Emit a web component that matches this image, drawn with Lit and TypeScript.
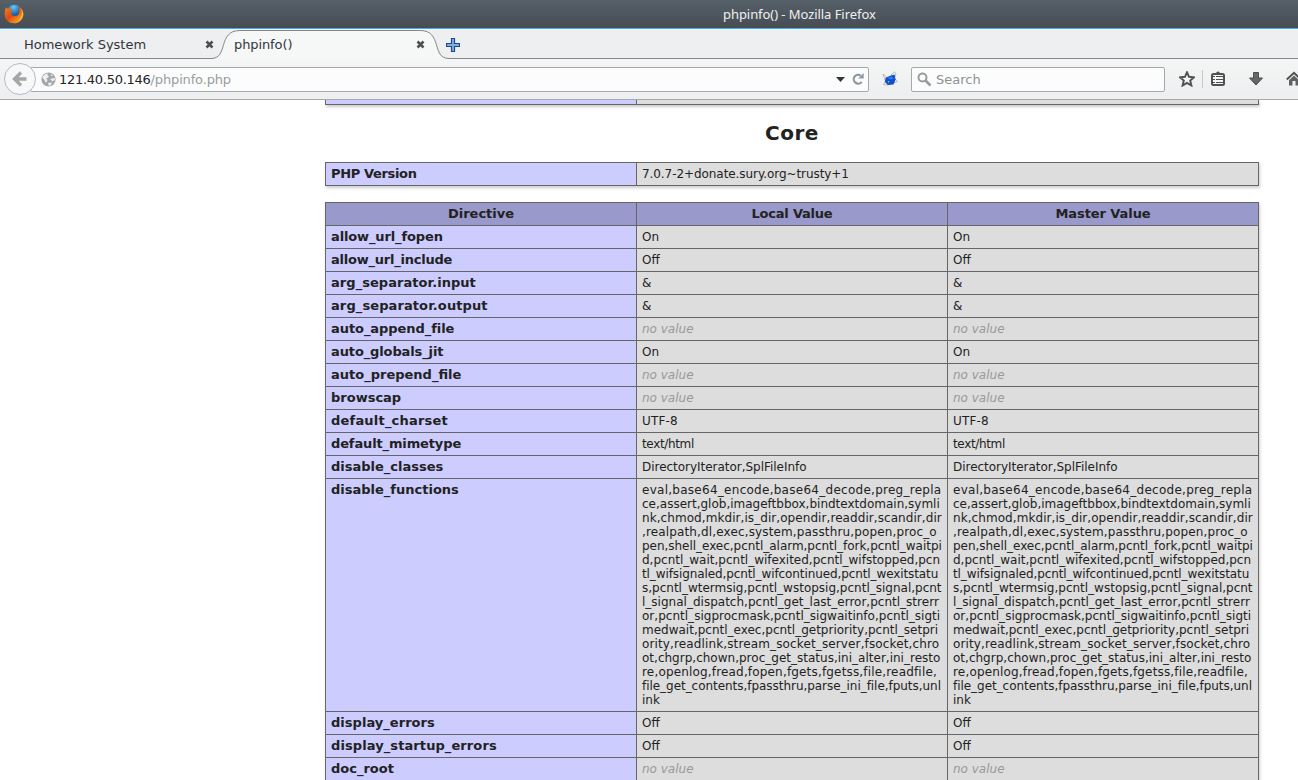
import { LitElement, html, css, svg } from "lit";
import { customElement } from "lit/decorators.js";
import { styleMap } from "lit/directives/style-map.js";

// Each line of text is paired with its tracking in pixels.
type Line = [string, number];

const DISABLED: Line[] = [
  ["eval,base64_encode,base64_decode,preg_repla", 0.27],
  ["ce,assert,glob,imageftbbox,bindtextdomain,symli", 0],
  ["nk,chmod,mkdir,is_dir,opendir,readdir,scandir,dir", 0.07],
  [",realpath,dl,exec,system,passthru,popen,proc_o", 0.14],
  ["pen,shell_exec,pcntl_alarm,pcntl_fork,pcntl_waitpi", -0.03],
  ["d,pcntl_wait,pcntl_wifexited,pcntl_wifstopped,pcn", 0],
  ["tl_wifsignaled,pcntl_wifcontinued,pcntl_wexitstatu", -0.1],
  ["s,pcntl_wtermsig,pcntl_wstopsig,pcntl_signal,pcnt", 0],
  ["l_signal_dispatch,pcntl_get_last_error,pcntl_strerr", 0.01],
  ["or,pcntl_sigprocmask,pcntl_sigwaitinfo,pcntl_sigti", 0.02],
  ["medwait,pcntl_exec,pcntl_getpriority,pcntl_setpri", 0],
  ["ority,readlink,stream_socket_server,fsocket,chro", 0.13],
  ["ot,chgrp,chown,proc_get_status,ini_alter,ini_resto", 0.01],
  ["re,openlog,fread,fopen,fgets,fgetss,file,readfile,", 0.17],
  ["file_get_contents,fpassthru,parse_ini_file,fputs,unl", -0.04],
  ["ink", 0],
];

const ROWS: [Line, Line[] | null][] = [
  [["allow_url_fopen", -0.13], [["On", 0]]],
  [["allow_url_include", -0.23], [["Off", 0]]],
  [["arg_separator.input", 0.05], [["&", 0]]],
  [["arg_separator.output", 0.1], [["&", 0]]],
  [["auto_append_file", -0.06], null],
  [["auto_globals_jit", -0.12], [["On", 0]]],
  [["auto_prepend_file", 0], null],
  [["browscap", 0], null],
  [["default_charset", 0.2], [["UTF-8", 0.15]]],
  [["default_mimetype", -0.13], [["text/html", -0.35]]],
  [["disable_classes", 0], [["DirectoryIterator,SplFileInfo", -0.03]]],
  [["disable_functions", 0], DISABLED],
  [["display_errors", 0.03], [["Off", 0]]],
  [["display_startup_errors", 0.09], [["Off", 0]]],
  [["doc_root", 0], null],
];

const line = ([text, tracking]: Line) =>
  html`<div style=${styleMap(tracking ? { letterSpacing: `${tracking}px` } : {})}>${text}</div>`;

@customElement("php-info")
export class PhpInfo extends LitElement {
  static styles = css`
    :host { display: block; flex: 1; min-height: 0; overflow: hidden; background: #fff; color: #222;
      font: 12px/14px "DejaVu Sans", sans-serif; }
    .page { width: 934px; margin-left: 325px; }
    .grid { display: grid; gap: 1px; padding: 1px; background: #666; box-shadow: 1px 2px 3px #ccc; }
    .two { grid-template-columns: 310px 621px; }
    .three { grid-template-columns: 310px 310px 310px; }
    .prev { padding-top: 0; height: 4px; }
    .grid > div { padding: 4px 5px; min-width: 0; white-space: pre; }
    .grid > .e { background: #ccf; font-weight: bold; font-size: 13px; }
    .grid > .h { background: #99c; font-weight: bold; text-align: center; font-size: 13px; }
    .grid > .v { background: #ddd; }
    .grid > .bare { padding: 0; }
    i { color: #999; }
    h2 { margin: 0; height: 57px; line-height: 57px; text-align: center; font-size: 20px; letter-spacing: 0.5px; }
    .gap { height: 16px; }
  `;
  render() {
    const cell = (v: Line[] | null) => html`<div class="v">${v === null ? html`<i>no value</i>` : v.map(line)}</div>`;
    return html`<div class="page">
      <div class="grid two prev"><div class="e bare"></div><div class="v bare"></div></div>
      <h2>Core</h2>
      <div class="grid two">
        <div class="e">${line(["PHP Version", -0.35])}</div>
        <div class="v">${line(["7.0.7-2+donate.sury.org~trusty+1", -0.07])}</div>
      </div>
      <div class="gap"></div>
      <div class="grid three">
        <div class="h">${line(["Directive", 0])}</div>
        <div class="h">${line(["Local Value", -0.22])}</div>
        <div class="h">${line(["Master Value", -0.08])}</div>
        ${ROWS.map(([k, v]) => html`<div class="e">${line(k)}</div>${cell(v)}${cell(v)}`)}
      </div>
    </div>`;
  }
}

const close = svg`<path d="M1.5 1.5 7.5 7.5M7.5 1.5 1.5 7.5" stroke="#4b4f52" stroke-width="2.5"/>`;

@customElement("app-root")
export class AppRoot extends LitElement {
  static styles = css`
    :host { display: flex; flex-direction: column; width: 1298px; height: 780px; overflow: hidden;
      font: 13px/16px "DejaVu Sans", sans-serif; color: #31363b; background: #fff; }
    svg { display: block; flex: none; }
    .title { height: 28px; flex: none; border-bottom: 1px solid #3daee9; box-sizing: content-box;
      background: linear-gradient(#566069, #464c53); color: #eff0f1; display: flex; align-items: center;
      font: 13px/18px "Noto Sans", sans-serif; letter-spacing: -0.06px; }
    .title svg { margin-left: 4px; }
    .title span { margin-left: 699px; }
    .tabs { height: 30px; flex: none; display: grid; background: #eeeff0; box-shadow: inset 0 1px #fcfcfc; }
    .tabs > * { grid-area: 1 / 1; }
    .labels { display: flex; align-items: center; padding: 1px 0 0 24px; }
    .t1 { width: 181px; letter-spacing: -0.03px; }
    .t2 { width: 182px; margin-left: 20px; letter-spacing: -0.1px; }
    .plus { margin-left: 21px; }
    .bar { height: 40px; flex: none; border-bottom: 1px solid #a6a8ab; display: flex; align-items: center;
      background: linear-gradient(#f4f5f5, #edeeef); overflow: hidden; }
    .bar > * { flex: none; }
    .back { width: 30px; height: 30px; border: 1px solid #b4bcc5; border-radius: 50%; background: #f7f8f8;
      margin-left: 4px; display: grid; place-items: center; z-index: 1; }
    .url { box-sizing: border-box; width: 839px; height: 25px; margin-left: -6px; border: 1px solid #a5a9ad;
      border-radius: 2px; background: #fcfcfc; display: flex; align-items: center; padding-left: 10px; }
    .addr { margin-left: 3px; padding-top: 1px; flex: 1; color: #999c9e; letter-spacing: -0.15px; }
    .addr b { font-weight: normal; color: #232629; letter-spacing: -0.27px; }
    .caret { margin-right: 7px; }
    .reload { margin-right: 4px; }
    .bird { margin-left: 13px; }
    .search { box-sizing: border-box; width: 254px; height: 25px; margin-left: 13px; border: 1px solid #a5a9ad;
      border-radius: 2px; background: #fcfcfc; display: flex; align-items: center; padding-left: 5px; gap: 4px; color: #8f9294; }
    .search span { padding-top: 1px; }
    .tools { display: flex; align-items: center; margin-left: 14px; }
    .sep { width: 1px; height: 18px; background: #c5cad0; margin: 0 7px; }
    .down { margin: 0 23px 0 23px; }
  `;
  render() {
    return html`
      <div class="title">
        <svg width="20" height="20" viewBox="0 0 20 20">
          <defs>
            <linearGradient id="fx" x1="0" y1="0" x2="1" y2="1"><stop offset="0" stop-color="#f08a1c"/><stop offset=".45" stop-color="#df4a14"/><stop offset=".75" stop-color="#f58a1c"/><stop offset="1" stop-color="#ffd43a"/></linearGradient>
            <radialGradient id="gl" cx=".45" cy=".15" r=".85"><stop offset="0" stop-color="#68c8f2"/><stop offset=".5" stop-color="#1b72b8"/><stop offset="1" stop-color="#0c2a63"/></radialGradient>
          </defs>
          <circle cx="10.4" cy="8.5" r="7.8" fill="url(#gl)"/>
          <path d="M2.2 3.2 4 5C5 4 6 4 7 4.2L6.5 6 9 7.3 7.2 9 8 11C10 13 13 12 14.5 10.5 16 8 15.5 5 14 2.2 18 4 19.6 7 19.3 11 18.7 16 15 19.3 10 19.3 4.5 19.3.8 15.5.7 10.5.7 7.5 1 5.3 2.2 3.2Z" fill="url(#fx)"/>
          <path d="M16.2 4C19 7.5 18.5 13 14.5 16.2 17.5 15.5 19 13 19.3 10.5 19.3 8 18 5.5 16.2 4Z" fill="#ffc02e"/>
        </svg>
        <span>phpinfo() - Mozilla Firefox</span>
      </div>
      <div class="tabs">
        <svg width="1298" height="30" viewBox="0 0 1298 30">
          <path d="M213 30C229 29 217 1.5 239 1.5H421C443 1.5 431 29 447 30Z" fill="#f6f7f7"/>
          <path d="M0 29.5H211C229 29.5 217 1.5 240 1.5H420C443 1.5 431 29.5 449 29.5H1298" fill="none" stroke="#85878a"/>
        </svg>
        <div class="labels">
          <span class="t1">Homework System</span>
          <svg width="9" height="9">${close}</svg>
          <span class="t2">phpinfo()</span>
          <svg width="9" height="9">${close}</svg>
          <svg class="plus" width="14" height="14"><path d="M5.5.5h3v5h5v3h-5v5h-3v-5h-5v-3h5Z" fill="#7cb0e2" stroke="#1f4a87" stroke-width="1.2"/></svg>
        </div>
      </div>
      <div class="bar">
        <div class="back"><svg width="16" height="16"><path d="M9 1.5 2.5 8 9 14.5M3 8H14.5" fill="none" stroke="#a5a6a7" stroke-width="3.3"/></svg></div>
        <div class="url">
          <svg width="15" height="15"><circle cx="7.5" cy="7.5" r="7.1" fill="#a5a6a7"/><path d="M1.2 5 4 2.2 7 1.2 6.3 3 8 4.5 5.5 6.8 6.5 8.5 5 11 3.5 8.2ZM9.5 2 12 3.2 10.8 4.5ZM9 7 13.8 5.8 13.8 8 11.5 9.5ZM7 11 11 10.5 9.5 13.5 7.5 13.6Z" fill="#eee"/></svg>
          <span class="addr"><b>121.40.50.146</b>/phpinfo.php</span>
          <svg class="caret" width="9" height="5"><path d="M0 0H9L4.5 5Z" fill="#31363b"/></svg>
          <svg class="reload" width="12" height="12"><path d="M9.7 8.8A4.4 4.4 0 1 1 8.7 2.6" fill="none" stroke="#8d99a5" stroke-width="2.2"/><path d="M11.7 0V5.5H6.2Z" fill="#8d99a5"/></svg>
        </div>
        <svg class="bird" width="16" height="16"><path d="M1 3 4.5 6 3 9ZM9 4 12.5.8 14 3 13 6ZM13 8 15.5 10.5 12 12ZM3 11 1.5 13.5 6 14.2Z" fill="#f4f2ea" stroke="#a9abad" stroke-width=".8"/><path d="M4 6.5 9 4.5 12.5 3.5 13.6 8.5 11.5 13.5 6 14 2.7 10.5Z" fill="#0d50cf"/><path d="M5 7 9.5 5.5 12 7.5 8.5 8.6Z" fill="#2b78ef"/><circle cx="6.5" cy="10.8" r=".8" fill="#e8c86a"/></svg>
        <div class="search">
          <svg width="15" height="15"><circle cx="5.5" cy="5.5" r="4" fill="none" stroke="#999b9d" stroke-width="2"/><path d="M8.5 8.5 13.5 13.5" stroke="#999b9d" stroke-width="2.6"/></svg>
          <span>Search</span>
        </div>
        <div class="tools">
          <svg width="16" height="16"><path d="M8 1.2 10 5.8 15 6.3 11.2 9.6 12.4 14.5 8 11.9 3.6 14.5 4.8 9.6 1 6.3 6 5.8Z" fill="#f5f5f5" stroke="#505153" stroke-width="1.9"/></svg>
          <div class="sep"></div>
          <svg width="16" height="16"><path d="M4.5 3 8 .2 11.5 3Z" fill="#505153"/><rect x="2" y="3" width="12" height="11" rx="1.5" fill="#f5f5f5" stroke="#505153" stroke-width="2"/><path d="M3 5.5h2m1 0h7M3 8.5h2m1 0h7M3 11.5h2m1 0h7" stroke="#505153"/></svg>
          <svg class="down" width="14" height="16"><path d="M4.5 1.5H9.5V7H13.5L7 14 .5 7H4.5Z" fill="#666" stroke="#4c4d4f"/></svg>
          <svg width="16" height="16"><path d="M.8 8.5 8 1.8 15.2 8.5" fill="none" stroke="#505153" stroke-width="2"/><path d="M3 9.2 8 4.6 13 9.2V14.5H9.5V10H6.5V14.5H3Z" fill="#606163"/></svg>
        </div>
      </div>
      <php-info></php-info>
    `;
  }
}
